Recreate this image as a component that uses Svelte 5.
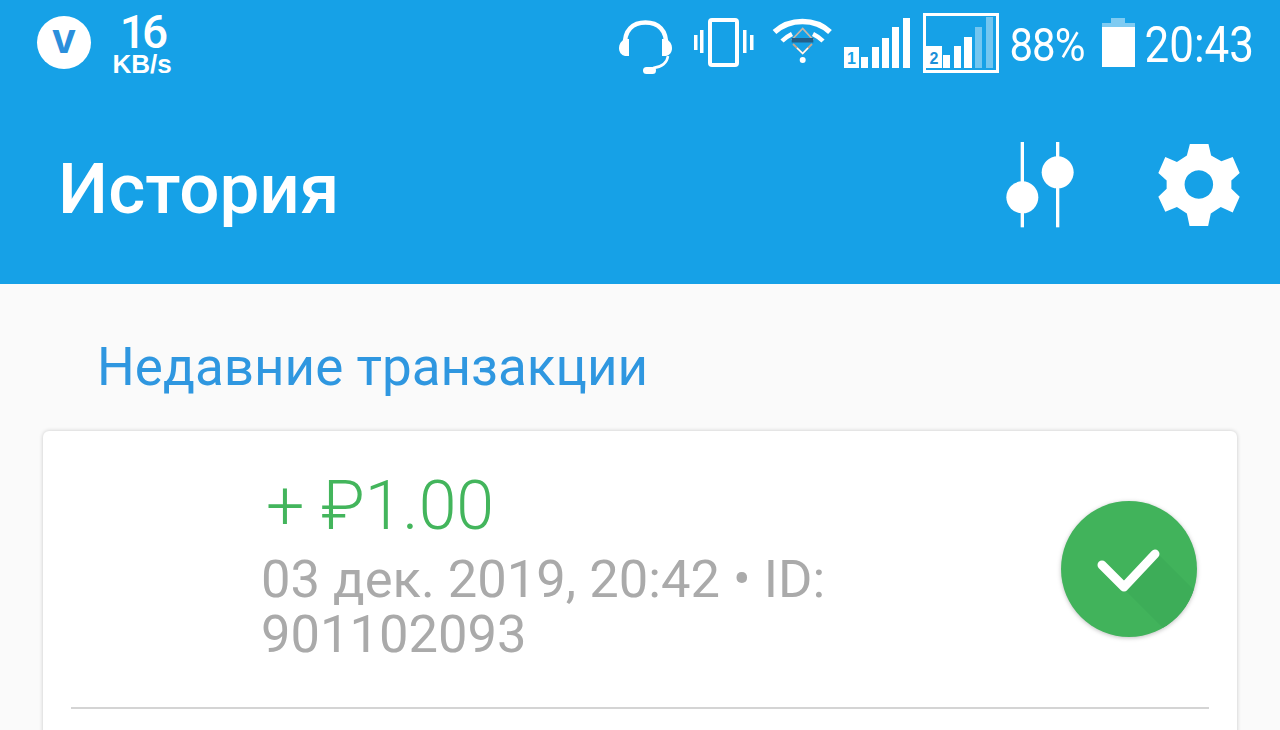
<script lang="ts">
	const transaction = {
		amount: '+ ₽1.00',
		meta: '03 дек. 2019, 20:42 • ID: 901102093'
	};

	const sim1 = [
		[17, 11],
		[28, 21],
		[38, 30],
		[48, 41],
		[59, 50]
	];
</script>

<div class="screen">
	<header class="top">
		<div class="status">
			<div class="status__left">
				<span class="vpn">v</span>
				<div class="speed">
					<span class="speed__value">16</span>
					<span class="speed__unit">KB/s</span>
				</div>
			</div>
			<div class="status__right">
				<svg class="icon-headset" viewBox="0 0 54 56" width="54" height="56" aria-hidden="true">
					<path d="M7 26C6 10 15 2.500 27.500 2.500S49 10 48 26" fill="none" stroke="#fff" stroke-width="4.500" />
					<path d="M7 19c-4 2-6 5-6 9s2 7 6 8h4V19z" fill="#fff" />
					<path d="M48 19c4 2 6 5 6 9s-2 7-6 8h-4V19z" fill="#fff" />
					<path d="M50 36c-1 7-6 11-15 12" fill="none" stroke="#fff" stroke-width="2.500" />
					<rect x="25" y="47" width="13" height="7" rx="3.500" fill="#fff" />
				</svg>
				<svg class="icon-vibrate" viewBox="0 0 63 50" width="63" height="50" aria-hidden="true">
					<rect x="18" y="2" width="27" height="45" rx="2" fill="none" stroke="#fff" stroke-width="4" />
					<rect x="2" y="17" width="3.500" height="15" fill="#fff" />
					<rect x="8" y="12" width="3.500" height="23" fill="#fff" />
					<rect x="51" y="12" width="3.500" height="23" fill="#fff" />
					<rect x="58" y="17" width="3.500" height="15" fill="#fff" />
				</svg>
				<svg class="icon-wifi" viewBox="0 0 60 46" width="60" height="46" aria-hidden="true">
					<path d="M2.500 14C18 0 43 0 58 14" fill="none" stroke="#fff" stroke-width="5.500" />
					<path d="M10 23C13 20 16 18 20 16M51 23C48 20 45 18 41 16" fill="none" stroke="#fff" stroke-width="4.500" />
					<path d="M19.700 22L30.700 10.500 41.300 22" fill="none" stroke="#c9b6a6" stroke-width="1.800" />
					<path d="M21 26L30.700 35.500 40 26" fill="none" stroke="#c9a890" stroke-width="1.800" />
					<path d="M25 30l5.700 5.500L36 30" fill="none" stroke="#fff" stroke-width="1.500" />
					<rect x="19.700" y="20" width="21.600" height="4.500" fill="#24608a" />
					<circle cx="30.700" cy="42" r="3" fill="#fff" />
				</svg>
				<svg class="icon-sim" viewBox="0 0 67 52" width="67" height="52" aria-hidden="true">
					<rect x="0" y="30" width="15" height="21" fill="#fff" />
					<text x="7.500" y="47" class="sim-digit">1</text>
					{#each sim1 as [x, h]}
						<rect {x} y={51 - h} width="7" height={h} fill="#fff" />
					{/each}
				</svg>
				<div class="sim2">
					<svg viewBox="0 0 70 54" width="70" height="54" aria-hidden="true">
						<rect x="0" y="30" width="16" height="22" fill="#fff" />
						<text x="8" y="48" class="sim-digit sim-digit--blue">2</text>
						<rect x="17" y="39" width="7" height="13" fill="#fff" />
						<rect x="28" y="30" width="7" height="22" fill="#fff" />
						<rect x="38" y="21" width="8" height="31" fill="#fff" />
						<rect x="49" y="11" width="7" height="41" fill="#fff" opacity="0.4" />
						<rect x="60" y="1" width="7" height="51" fill="#fff" opacity="0.4" />
					</svg>
				</div>
				<span class="status__text status__text--percent">88%</span>
				<svg class="icon-battery" viewBox="0 0 33 49" width="33" height="49" aria-hidden="true">
					<rect x="9" y="0" width="14" height="5" fill="#fff" opacity="0.45" />
					<rect x="0" y="5" width="33" height="4" fill="#fff" opacity="0.45" />
					<rect x="0" y="9" width="33" height="40" fill="#fff" />
				</svg>
				<span class="status__text status__text--time">20:43</span>
			</div>
		</div>
		<div class="toolbar">
			<h1 class="toolbar__title">История</h1>
			<div class="toolbar__actions">
				<svg viewBox="75 60 210 270" width="70" height="90" aria-hidden="true">
					<rect x="122" y="66" width="10" height="256" fill="#fff" />
					<rect x="228" y="66" width="10" height="256" fill="#fff" />
					<circle cx="127" cy="232" r="48" fill="#fff" />
					<circle cx="233" cy="157" r="48" fill="#fff" />
				</svg>
				<svg viewBox="535 68 245 247" width="82" height="82" aria-hidden="true">
					<path
						fill="#fff"
						fill-rule="evenodd"
						d="M630 68h56l8 35 31 17 34-13 21 48-25 23v25l25 24-21 47-36-16-30 19-8 38h-56l-8-38-30-19-35 14-21-45 25-24v-25l-25-23 21-48 35 15 30-19z M657 147a43 43 0 1 0 .01 0z"
					/>
				</svg>
			</div>
		</div>
	</header>

	<main class="content">
		<h2 class="section-title">Недавние транзакции</h2>
		<section class="card">
			<div class="tx">
				<div class="tx__body">
					<div class="tx__amount">{transaction.amount}</div>
					<div class="tx__meta">{transaction.meta}</div>
				</div>
				<svg class="tx__status" viewBox="0 0 136 136" width="136" height="136" aria-hidden="true">
					<defs>
						<clipPath id="disc"><circle cx="68" cy="68" r="68" /></clipPath>
					</defs>
					<circle cx="68" cy="68" r="68" fill="#41b35b" />
					<path d="M63 88L97 53l60 60-34 35z" fill="#3dad58" clip-path="url(#disc)" />
					<path d="M41 64l22 22 31-33" fill="none" stroke="#fff" stroke-width="9" stroke-linecap="round" stroke-linejoin="round" />
				</svg>
			</div>
			<div class="card__divider"></div>
			<div class="tx tx--next"></div>
		</section>
	</main>
</div>

<style>
	:global(body) {
		margin: 0;
		background: #fafafa;
	}

	.screen {
		display: flex;
		flex-direction: column;
		height: 730px;
		overflow: hidden;
		background: #fafafa;
		font-family: Roboto, 'Noto Sans', sans-serif;
	}

	.top {
		flex: none;
		height: 284px;
		background: #16a1e7;
		color: #fff;
	}

	.status {
		display: flex;
		align-items: flex-start;
		justify-content: space-between;
		height: 100px;
		padding: 12px 26px 0 37px;
		box-sizing: border-box;
	}

	.status__left {
		display: flex;
		gap: 20px;
	}

	.vpn {
		display: flex;
		align-items: center;
		justify-content: center;
		width: 54px;
		height: 53px;
		margin-top: 4px;
		padding-bottom: 7px;
		box-sizing: border-box;
		border-radius: 50%;
		background: #fff;
		color: #2a8fdc;
		font: 700 42px/1 'Liberation Sans', sans-serif;
	}

	.speed {
		display: flex;
		flex-direction: column;
		align-items: center;
		width: 62px;
		font-family: 'Liberation Sans', sans-serif;
	}

	.speed__value {
		font-family: Roboto, sans-serif;
		font-size: 46px;
		font-weight: 500;
		line-height: 40px;
		letter-spacing: -4px;
	}

	.speed__unit {
		font-size: 26px;
		line-height: 24px;
		font-weight: 700;
	}

	.status__right {
		display: flex;
		align-items: flex-start;
	}

	.icon-headset {
		margin-top: 8px;
	}

	.icon-vibrate {
		margin: 6px 0 0 20px;
	}

	.icon-wifi {
		margin: 6px 0 0 17px;
	}

	.icon-sim {
		margin: 5px 0 0 12px;
	}

	.sim-digit {
		font: 700 16px 'Liberation Sans', sans-serif;
		text-anchor: middle;
		fill: #16a1e7;
	}

	.sim-digit--blue {
		fill: #1b8fd8;
	}

	.sim2 {
		box-sizing: border-box;
		width: 76px;
		height: 60px;
		margin: 1px 0 0 12px;
		border: 3px solid #fff;
	}

	.sim2 svg {
		display: block;
	}

	.status__text {
		display: inline-block;
		margin-top: 7px;
		font-weight: 400;
		line-height: 52px;
		transform: scaleY(1.12);
	}

	.status__text--percent {
		width: 83px;
		margin-left: 10px;
		font-size: 42px;
		letter-spacing: -1px;
	}

	.status__text--time {
		margin-left: 9px;
		font-size: 44px;
	}

	.icon-battery {
		margin: 6px 0 0 10px;
	}

	.toolbar {
		display: flex;
		align-items: center;
		justify-content: space-between;
		height: 184px;
		padding: 0 40px 0 58px;
	}

	.toolbar__title {
		margin: 0 0 7px;
		font-size: 71px;
		font-weight: 500;
		line-height: 1;
	}

	.toolbar__actions {
		display: flex;
		align-items: center;
		gap: 83px;
		margin-bottom: 14px;
	}

	.toolbar__actions svg {
		display: block;
	}

	.content {
		flex: 1;
		padding: 0 43px;
	}

	.section-title {
		margin: 53px 0 34px 54px;
		color: #2f97e0;
		font-size: 53px;
		font-weight: 400;
		line-height: 60px;
	}

	.card {
		width: 1194px;
		padding: 0 28px;
		box-sizing: border-box;
		background: #fff;
		border-radius: 6px;
		box-shadow: 0 0 4px rgba(0, 0, 0, 0.2);
	}

	.tx {
		display: flex;
		align-items: flex-start;
		justify-content: space-between;
		height: 276px;
		padding: 39px 12px 0 190px;
		box-sizing: border-box;
	}

	.tx__body {
		width: 640px;
	}

	.tx__amount {
		padding-left: 5px;
		color: #43b55c;
		font-size: 68px;
		font-weight: 300;
		line-height: 72px;
	}

	.tx__meta {
		margin-top: 10px;
		color: #aaa;
		font-size: 52.500px;
		line-height: 55px;
	}

	.tx__status {
		flex: none;
		margin-top: 31px;
		filter: drop-shadow(0 1px 2px rgba(0, 0, 0, 0.25));
	}

	.card__divider {
		height: 2px;
		background: #d4d4d4;
	}
</style>
